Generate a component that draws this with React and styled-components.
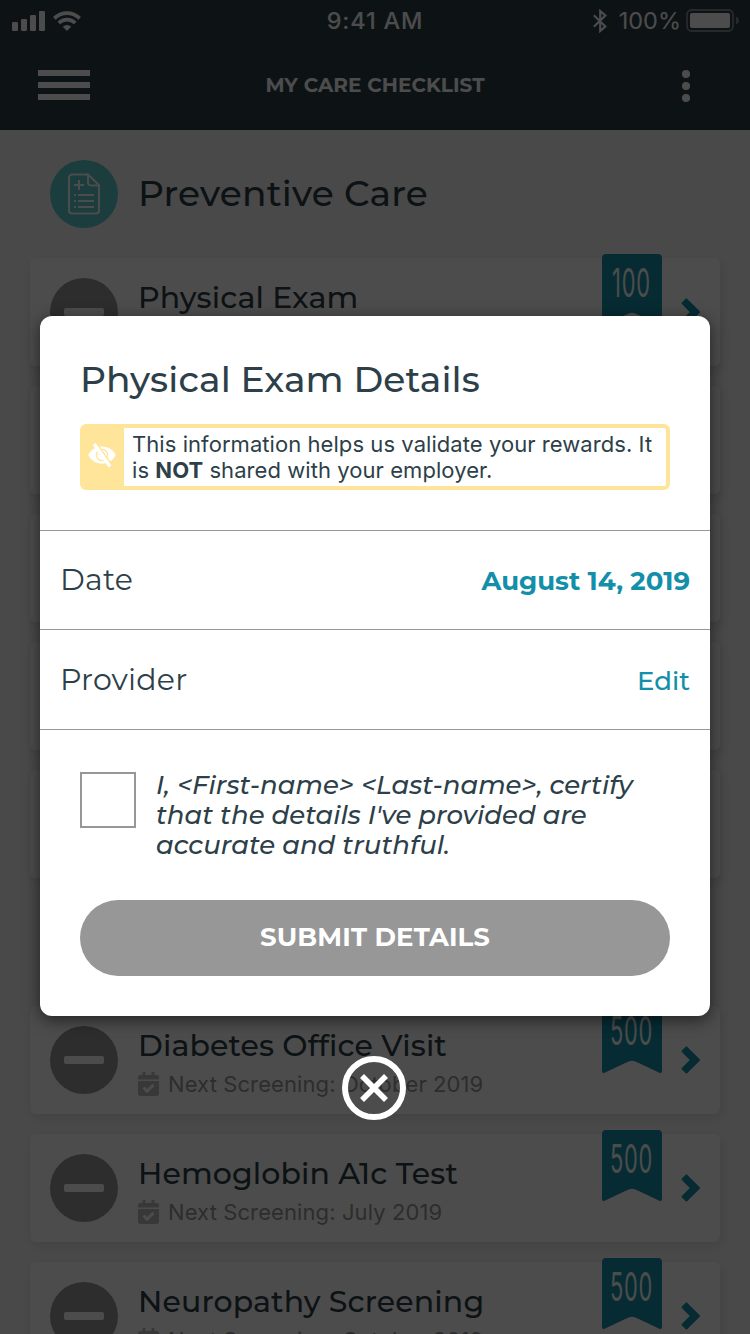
import React from "react";
import styled, { createGlobalStyle } from "styled-components";
import { FaCalendarCheck } from "react-icons/fa";

const Global = createGlobalStyle`
  *, *::before, *::after { box-sizing: border-box; }
  body { margin: 0; background: #f5f5f5; font-family: Montserrat, Inter, "Open Sans", sans-serif; }
  button { font: inherit; border: 0; padding: 0; background: none; }
  h1, h2, h3, p { margin: 0; }
  svg { display: block; flex: none; }
`;

const ink = "#2d3f49";
const teal = "#148fa9";
const grey = "#979797";

const Screen = styled.div`
  position: relative;
  width: 750px;
  height: 1334px;
  overflow: hidden;
  background: #f5f5f5;
  color: ${ink};
`;

const Header = styled.header`
  height: 130px;
  background: ${ink};
  color: #fff;
`;

const StatusBar = styled.div`
  display: grid;
  grid-template-columns: 1fr auto 1fr;
  height: 41px;
  padding: 0 12px;
  align-items: center;
  font-family: Inter, sans-serif;
  font-size: 23.5px;
`;

const StatusGroup = styled.div`
  display: flex;
  align-items: center;
  justify-content: ${(p) => (p.$end ? "flex-end" : "flex-start")};
  gap: ${(p) => p.$gap}px;
  margin-right: ${(p) => (p.$end ? "-1px" : 0)};
`;

const Clock = styled.div`
  font-weight: 500;
  letter-spacing: 0.8px;
`;

const Percent = styled.span`
  padding-left: 7px;
`;

const NavBar = styled.nav`
  display: grid;
  grid-template-columns: 1fr auto 1fr;
  height: 89px;
  padding: 29px 38px 0;
`;

const MenuButton = styled.button`
  display: flex;
  flex-direction: column;
  gap: 6px;
  width: 52px;
`;

const MenuBar = styled.span`
  height: 6px;
  background: #fff;
`;

const NavTitle = styled.h1`
  height: 30px;
  line-height: 31px;
  font-size: 20px;
  font-weight: 700;
  letter-spacing: 0.05px;
`;

const Dots = styled.button`
  display: flex;
  flex-direction: column;
  gap: 4px;
  width: 8px;
  justify-self: end;
  margin-right: 22px;
`;

const Dot = styled.span`
  width: 8px;
  height: 8px;
  border-radius: 50%;
  background: #fff;
`;

const Section = styled.section`
  display: flex;
  flex-direction: column;
  gap: 20px;
  padding: 0 30px;
  margin-top: ${(p) => p.$top || 0}px;
`;

const SectionHead = styled.div`
  display: flex;
  align-items: center;
  gap: 20px;
  height: 108px;
  padding: 30px 20px 10px;
`;

const SectionTitle = styled.h2`
  padding-bottom: 2px;
  font-size: 36px;
  font-weight: 500;
  line-height: 66px;
  letter-spacing: 0.2px;
`;

const Disc = styled.div`
  display: flex;
  align-items: center;
  justify-content: center;
  flex: none;
  width: 68px;
  height: 68px;
  border-radius: 50%;
  background: ${(p) => p.$color};
`;

const Minus = styled.span`
  width: 40px;
  height: 8px;
  border-radius: 2px;
  background: #fff;
`;

const Card = styled.article`
  display: flex;
  flex: none;
  height: 108px;
  padding: 0 20px;
  border-radius: 6px;
  background: #fff;
  box-shadow: 2px 4px 12px rgba(0, 0, 0, 0.1);
  & > ${Disc} { margin-top: 20px; }
`;

const CardText = styled.div`
  flex: 1;
  padding: 21px 0 0 20px;
`;

const CardTitle = styled.h3`
  line-height: 37px;
  font-size: 30px;
  font-weight: 500;
  letter-spacing: 0.12px;
  white-space: nowrap;
`;

const CardNote = styled.p`
  display: flex;
  align-items: center;
  gap: 9px;
  margin-top: 6px;
  font-family: Inter, sans-serif;
  font-size: 22px;
  line-height: 28px;
  letter-spacing: 0.1px;
  white-space: nowrap;
  color: ${grey};
`;

const CalendarIcon = styled(FaCalendarCheck)`
  width: 21px;
  height: 24px;
  color: #bcbcbc;
`;

const Ribbon = styled.div`
  position: relative;
  width: 60px;
  height: 72px;
  margin: -4px 18px 0 0;
`;

const Points = styled.span`
  position: absolute;
  inset: 0 0 auto -1px;
  display: flex;
  justify-content: center;
  line-height: 57px;
  font-family: Inter, sans-serif;
  font-size: 39px;
  font-weight: 400;
  letter-spacing: 1.4px;
  color: #fff;
  transform: scaleX(0.56);
`;

const ChevronBox = styled.div`
  padding-top: 40px;
`;

const Overlay = styled.div`
  position: absolute;
  inset: 0;
  display: flex;
  flex-direction: column;
  align-items: center;
  padding-top: 316px;
  background: rgba(0, 0, 0, 0.7);
`;

const Modal = styled.div`
  width: 670px;
  height: 700px;
  border-radius: 12px;
  background: #fff;
  box-shadow: 0 4px 16px rgba(0, 0, 0, 0.55);
`;

const ModalTop = styled.div`
  height: 214px;
  padding: 40px 40px 0;
`;

const ModalTitle = styled.h2`
  line-height: 47px;
  font-size: 36px;
  font-weight: 500;
  letter-spacing: 0.1px;
`;

const Notice = styled.div`
  display: flex;
  height: 66px;
  margin-top: 21px;
  border: 4px solid #ffe599;
  border-radius: 6px;
`;

const NoticeIcon = styled.div`
  display: flex;
  align-items: center;
  width: 40px;
  padding: 0 0 4px 4px;
  background: #ffe599;
`;

const NoticeText = styled.p`
  padding: 3px 0 0 8px;
  font-family: Inter, sans-serif;
  font-size: 22px;
  line-height: 26px;
  letter-spacing: 0.06px;
  white-space: nowrap;
`;

const Row = styled.div`
  display: flex;
  align-items: center;
  justify-content: space-between;
  height: ${(p) => p.$h}px;
  padding: 0 20px;
  border-top: 1px solid ${grey};
`;

const RowLabel = styled.span`
  padding-bottom: ${(p) => p.$lift || 0}px;
  font-size: 30px;
  line-height: 40px;
  letter-spacing: 0.22px;
`;

const RowValue = styled.span`
  padding-top: 2px;
  font-size: 26px;
  font-weight: ${(p) => p.$w};
  line-height: 38px;
  color: ${teal};
`;

const Certify = styled.div`
  display: flex;
  gap: 20px;
  padding: 42px 40px 0;
  border-top: 1px solid ${grey};
`;

const CheckBox = styled.span`
  width: 56px;
  height: 56px;
  border: 2px solid ${grey};
`;

const CertifyText = styled.p`
  margin-top: -2px;
  font-size: 26px;
  font-weight: 500;
  font-style: italic;
  line-height: 30px;
  white-space: nowrap;
`;

const Submit = styled.button`
  display: block;
  width: 590px;
  height: 76px;
  margin: 40px 40px 0;
  padding-bottom: 2px;
  border-radius: 38px;
  background: ${grey};
  color: #fff;
  font-size: 26px;
  font-weight: 700;
  letter-spacing: 0.1px;
`;

const Close = styled.button`
  margin: 40px 2px 0 0;
`;

const Signal = () => (
  <svg width="33" height="20" fill="currentColor">
    <rect x="0" y="11" width="6" height="9" rx="1.3" />
    <rect x="9" y="8" width="6" height="12" rx="1.3" />
    <rect x="18" y="4" width="6" height="16" rx="1.3" />
    <rect x="27" y="0" width="6" height="20" rx="1.3" />
  </svg>
);

const Wifi = () => (
  <svg width="28" height="20" fill="none" stroke="currentColor" strokeWidth="3.8">
    <path d="M1.3 7.4a18 18 0 0 1 25.4 0" />
    <path d="M5.8 12a11.6 11.6 0 0 1 16.4 0" />
    <path d="M14 20l-4.2-4.2a6 6 0 0 1 8.4 0z" fill="currentColor" stroke="none" />
  </svg>
);

const Bluetooth = () => (
  <svg width="14" height="24" fill="none" stroke="currentColor" strokeWidth="2.1">
    <path d="M.8 6.2l11.6 11.2L7.2 22V2l5.2 4.6L.8 17.8" />
  </svg>
);

const Battery = () => (
  <svg width="53" height="24">
    <rect x="1" y="1" width="46" height="21" rx="4.5" fill="none" stroke="#fff" strokeOpacity=".4" strokeWidth="1.8" />
    <rect x="4" y="4" width="40" height="15" rx="2" fill="#fff" />
    <path d="M50 7.5q3 1.4 3 4t-3 4z" fill="#fff" fillOpacity=".4" />
  </svg>
);

const ChecklistDoc = () => (
  <svg width="34" height="42" fill="none" stroke="#fff" strokeWidth="2">
    <path d="M21 1.5H5a3 3 0 0 0-3 3v33a3 3 0 0 0 3 3h24a3 3 0 0 0 3-3V12z" strokeLinejoin="round" />
    <path d="M21 1.5v8a3 3 0 0 0 3 3h8M12 7v10M7 12h10M7 22h2M11 22h16M7 28h2M11 28h16M7 34h2M11 34h16" />
  </svg>
);

const Chevron = () => (
  <svg width="20" height="28" fill={teal} stroke={teal} strokeWidth="2" strokeLinejoin="round">
    <path d="M2.600 5.200L6.400 1.400L19 14L6.400 26.600L2.600 22.800L11.200 14z" />
  </svg>
);

const EyeOff = () => (
  <svg width="28" height="26" fill="none">
    <path d="M.3 13C5.500 1.500 22.500 1.500 27.700 13C22.500 24.500 5.500 24.500 .3 13z" fill="#fff" />
    <circle cx="14" cy="13" r="5.600" stroke="#ffe599" strokeWidth="1.300" />
    <path d="M11 13a3 3 0 0 1 3-3" stroke="#ffe599" strokeWidth="1.300" />
    <path d="M8.400 1L24.400 24" stroke="#ffe599" strokeWidth="1.600" />
    <path d="M6.200 2L22 24.500" stroke="#fff" strokeWidth="3.400" />
  </svg>
);

const CloseIcon = () => (
  <svg width="64" height="64" fill="none" stroke="#fff">
    <circle cx="32" cy="32" r="29" strokeWidth="6" />
    <path d="M20 20l24 24M44 20L20 44" strokeWidth="5.600" />
  </svg>
);

function CareCard({ title, note, points }) {
  return (
    <Card>
      <Disc $color={grey}><Minus /></Disc>
      <CardText>
        <CardTitle>{title}</CardTitle>
        {note && <CardNote><CalendarIcon />{note}</CardNote>}
      </CardText>
      <Ribbon>
        <svg width="60" height="72" fill={teal}>
          <path d="M4 0H56a4 4 0 0 1 4 4V69.500q0 2-2.500 1.200L33.500 59.500q-3.500-1.300-7 0L2.500 70.700Q0 71.500 0 69.500V4a4 4 0 0 1 4-4z" />
        </svg>
        <Points>{points}</Points>
      </Ribbon>
      <ChevronBox><Chevron /></ChevronBox>
    </Card>
  );
}

export default function App() {
  return (
    <Screen>
      <Global />
      <Header>
        <StatusBar>
          <StatusGroup $gap={8}><Signal /><Wifi /></StatusGroup>
          <Clock>9:41 AM</Clock>
          <StatusGroup $end $gap={5}><Bluetooth /><Percent>100%</Percent><Battery /></StatusGroup>
        </StatusBar>
        <NavBar>
          <MenuButton aria-label="Menu"><MenuBar /><MenuBar /><MenuBar /></MenuButton>
          <NavTitle>MY CARE CHECKLIST</NavTitle>
          <Dots aria-label="More"><Dot /><Dot /><Dot /></Dots>
        </NavBar>
      </Header>

      <Section>
        <SectionHead>
          <Disc $color="#5fcbce"><ChecklistDoc /></Disc>
          <SectionTitle>Preventive Care</SectionTitle>
        </SectionHead>
        <CareCard title="Physical Exam" points="100" />
        <Card />
        <Card />
        <Card />
        <Card />
      </Section>
      <Section $top={128}>
        <CareCard title="Diabetes Office Visit" note="Next Screening: October 2019" points="500" />
        <CareCard title="Hemoglobin A1c Test" note="Next Screening: July 2019" points="500" />
        <CareCard title="Neuropathy Screening" note="Next Screening: October 2019" points="500" />
      </Section>

      <Overlay>
        <Modal>
          <ModalTop>
            <ModalTitle>Physical Exam Details</ModalTitle>
            <Notice>
              <NoticeIcon><EyeOff /></NoticeIcon>
              <NoticeText>
                This information helps us validate your rewards. It<br />
                is <b>NOT</b> shared with your employer.
              </NoticeText>
            </Notice>
          </ModalTop>
          <Row $h={99}>
            <RowLabel $lift={1}>Date</RowLabel>
            <RowValue $w={700}>August 14, 2019</RowValue>
          </Row>
          <Row $h={100}>
            <RowLabel>Provider</RowLabel>
            <RowValue $w={500}>Edit</RowValue>
          </Row>
          <Certify>
            <CheckBox />
            <CertifyText>
              I, &lt;First-name&gt; &lt;Last-name&gt;, certify<br />
              that the details I've provided are<br />
              accurate and truthful.
            </CertifyText>
          </Certify>
          <Submit>SUBMIT DETAILS</Submit>
        </Modal>
        <Close aria-label="Close"><CloseIcon /></Close>
      </Overlay>
    </Screen>
  );
}
